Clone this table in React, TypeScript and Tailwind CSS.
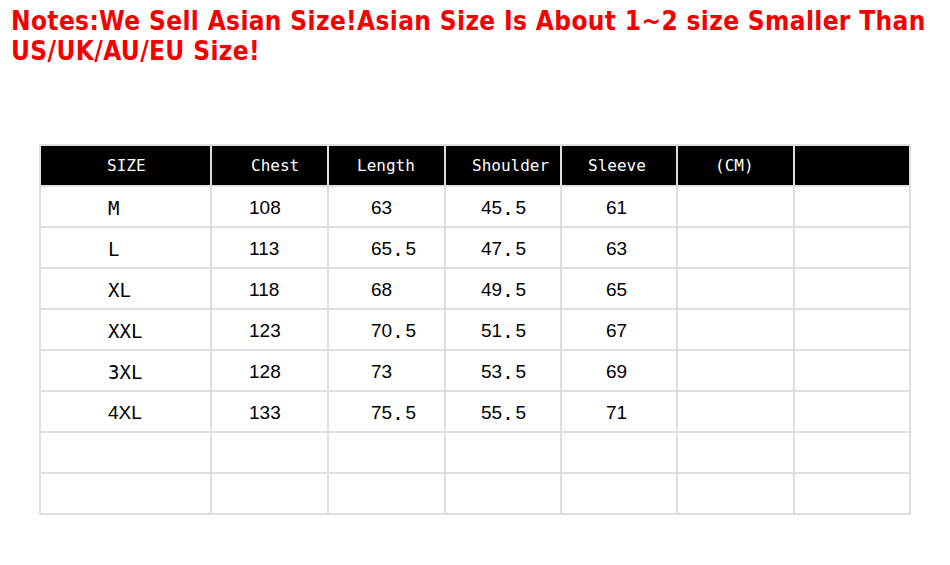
const mono = "font-['DejaVu_Sans_Mono',monospace]"
const sans = "font-['Liberation_Sans',Arial,sans-serif]"

const headers = [
  { label: "SIZE", pad: "pl-[66px]" },
  { label: "Chest", pad: "pl-[39px]" },
  { label: "Length", pad: "pl-[28px]" },
  { label: "Shoulder", pad: "pl-[26px]" },
  { label: "Sleeve", pad: "pl-[26px]" },
  { label: "(CM)", pad: "pl-[37px]" },
  { label: "", pad: "" },
]

const dataPads = ["pl-[67px]", "pl-[37px]", "pl-[42px]", "pl-[35px]", "pl-[44px]", "", ""]

const rows = [
  ["M", "108", "63", "45.5", "61"],
  ["L", "113", "65.5", "47.5", "63"],
  ["XL", "118", "68", "49.5", "65"],
  ["XXL", "123", "70.5", "51.5", "67"],
  ["3XL", "128", "73", "53.5", "69"],
  ["4XL", "133", "75.5", "55.5", "71"],
  ["", "", "", "", ""],
  ["", "", "", "", ""],
]

// decimals in the source image use a wide half-width dot
function Num({ v }: { v: string }) {
  const parts = v.split(".")
  if (parts.length === 1) return <>{v}</>
  return (
    <>
      {parts[0]}
      <span className={`${mono} pr-[2px]`}>.</span>
      {parts[1]}
    </>
  )
}

export default function App() {
  return (
    <div className="w-[950px] h-[565px] bg-white overflow-hidden">
      <h1 className="pl-[11px] pt-[6px] text-[#f40000] font-bold text-[26px] leading-[30px] tracking-[0.35px] font-['DejaVu_Sans_Condensed','DejaVu_Sans',sans-serif]">
        Notes:We Sell Asian Size!Asian Size Is About 1~2 size Smaller Than US/UK/AU/EU Size!
      </h1>

      <div className="ml-[39px] mt-[78px] w-[872px] grid grid-cols-[169px_115px_115px_114px_114px_115px_114px] gap-[2px] p-[2px] bg-[#dedede]">
        {headers.map((h, i) => (
          <div
            key={i}
            className={`h-[39px] bg-black text-white text-[16px] flex items-center ${mono} ${h.pad}`}
          >
            {h.label}
          </div>
        ))}
        {rows.map((r, ri) =>
          [...r, "", ""].map((c, ci) => (
            <div
              key={`${ri}-${ci}`}
              className={`h-[39px] bg-white text-black text-[19px] flex items-center pt-[3px] ${
                ci === 0 && ri < 5 ? `${mono} text-[17px]` : sans
              } ${dataPads[ci]}`}
            >
              {ci === 0 ? c : <Num v={c} />}
            </div>
          ))
        )}
      </div>
    </div>
  )
}
